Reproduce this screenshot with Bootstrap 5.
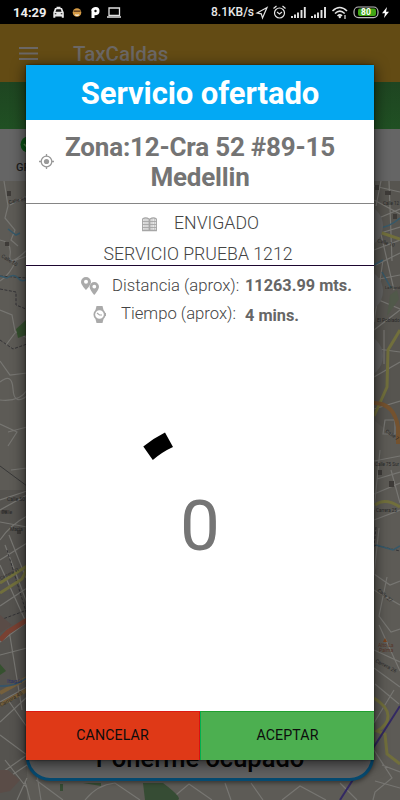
<!DOCTYPE html>
<html lang="es">
<head>
<meta charset="utf-8">
<meta name="viewport" content="width=device-width, initial-scale=1">
<title>TaxCaldas</title>
<link href="https://cdn.jsdelivr.net/npm/bootstrap@5.3.0/dist/css/bootstrap.min.css" rel="stylesheet">
<style>
html,body{height:100%}
body{font-family:Roboto,"Liberation Sans",sans-serif;background:#000;line-height:1.2}
svg{display:block;flex:none}
.phone{width:400px;height:800px}
.statusbar{height:24px;background:#000;color:#e8e8e8;font-size:12px;font-weight:500;padding:1px 10px 0 13px}
.clock{font-size:13px;font-weight:700;color:#eee;width:40px}
.appbar{height:58px;background:#634b14;padding-left:19px;color:#6b6765}
.brand{font-size:20.5px;font-weight:500;margin-left:35px;padding-top:3px}
.greenbar{height:47px;background:linear-gradient(#1e4521,#205023)}
.tabs{height:52px;background:#656565;color:#1c1c1c;font-size:11px;font-weight:500;padding:7px 0 0 16px}
.tab-icon{margin-left:4px}
.tab-label{padding-top:8px}
.map{height:619px;background:#5d5b56}
.pill{left:26px;top:720px;width:348px;height:61px;border:3px solid #064a70;border-radius:0 0 24px 24px;background:#626262;font-size:25.5px;font-weight:500;color:#050505;padding-bottom:4px;box-shadow:0 2px 4px #0006}
.dialog-box{left:26px;top:65px;width:348px;height:695px;border-radius:2px 2px 0 0;box-shadow:0 3px 14px 1px #0009,0 0 2px #000a;color:#666}
.dialog-title{height:55px;background:#03a9f4;font-size:31px;font-weight:700;letter-spacing:-.1px;padding-top:3px}
.address{height:84px;border-bottom:1px solid #858585;font-size:26px;font-weight:700;line-height:30px;letter-spacing:-.2px;color:#747474;padding:0 0 0 13px}
.address-text{width:292px;padding-top:1px}
.service{height:62px;border-bottom:1px solid #1d0730;font-size:17.7px;font-weight:300;color:#444;padding-top:9px}
.line-a{height:22px;padding-left:116px}
.line-a span{margin-left:17px}
.line-b{height:22px;margin-top:9px;padding-right:4px}
.line-c{height:24px;margin-top:8px;padding-left:54px;font-size:16.7px;font-weight:300;color:#444}
.line-d{height:24px;margin-top:4px;padding-left:67px;font-size:16.7px;font-weight:300;color:#444}
.line-c .key{margin-left:12px;width:133px}
.line-d .key{margin-left:14px;width:124px}
.val{font-size:16.3px;font-weight:700;color:#666}
.counter{font-size:71px;color:#757575;line-height:80px;margin-top:25px}
.tick{margin:106px 0 0 117px}
.actions{height:49px}
.actions .btn{border-radius:0;font-size:14.2px;color:#0d0d0d;padding:0;letter-spacing:.1px}
.actions .no{background:#df3917;border:0;border-top:1px solid #dc1a12;border-right:1px solid #e01010}
.actions .yes{background:#4caf50;border:0;border-top:1px solid #1f9f2f;border-left:1px solid #00b050}
</style>
<script src="https://cdn.jsdelivr.net/npm/bootstrap@5.3.0/dist/js/bootstrap.bundle.min.js"></script>
</head>
<body>
<div class="phone position-relative overflow-hidden d-flex flex-column">
  <div class="statusbar d-flex align-items-center">
    <span class="clock">14:29</span>
    <svg width="70" height="16" viewBox="53 5 70 16">
      <path d="M53.300 17.800V12.500l1.700-4.500h1.500V6.800h4V8H62l1.800 4.500v5.300h-2V16.500h-6.500v1.300z" fill="#e8e8e8"/><path d="M55.500 11.800l.9-2.500h4.300l.9 2.500zM54.800 13.300h1.500v1h-1.500zM60.800 13.300h1.500v1h-1.500z" fill="#111"/>
      <circle cx="77" cy="12.500" r="4.300" fill="#d69b45"/><path d="M73.500 10.500h7v1.300h-7z" fill="#56351e"/><path d="M75 14q2 1 4 0l-.5 2h-3z" fill="#f0e6d5"/>
      <path d="M91 10.500q1-3.500 4.800-3.500 3.700 0 3.700 4 0 4.500-5 4.300V18h-3v-7.500z" fill="#fff"/><circle cx="95.500" cy="11" r="1.200" fill="#111"/>
      <path d="M109 8h10.500v7.300H109zM107 17h14" fill="none" stroke="#e0e0e0" stroke-width="1.300"/>
    </svg>
    <span class="ms-auto">8.1KB/s</span>
    <svg width="136" height="16" viewBox="254 5 136 16" fill="none" stroke="#e4e4e4">
      <path d="M257 13l10-5.500-4.500 10.500-1.200-4.200z" stroke-width="1.200"/>
      <circle cx="279.500" cy="13" r="5" stroke-width="1.200"/><path d="M277 12l2.500 2 2.500-2M273.500 8.500l3-2.500M285.500 8.500l-3-2.500" stroke-width="1.200"/>
      <path d="M292 18v-2M295 18v-3.500M298 18v-5.500M301.500 18V10M304.800 18V7M312 18v-2M315 18v-3.500M318 18v-5.500M321.500 18V10M325 18V7" stroke-width="1.900"/>
      <path d="M332.500 11q7.200-7 14.500 0M335 13.500q4.800-4.600 9.700 0M337.500 16q2.400-2.200 4.500 0" stroke-width="1.600"/><circle cx="339.800" cy="17" r="1.200" fill="#e4e4e4" stroke="none"/><path d="M345 15v4" stroke-width="1.200"/>
      <rect x="354" y="7" width="24" height="10.600" rx="4.500" stroke-width="1.200" stroke="#bbb"/><rect x="358" y="8.500" width="18" height="7.600" rx="2" fill="#43a516" stroke="none"/>
      <text x="366" y="15.400" text-anchor="middle" font-size="8.500" font-weight="700" fill="#fff" stroke="none">80</text>
      <path d="M387 7l-5 6.200h3l-1 4.800 5-6.200h-3z" fill="#fff" stroke="none"/>
    </svg>
  </div>
  <header class="appbar d-flex align-items-center">
    <svg width="19" height="13" viewBox="0 0 19 13"><path d="M0 1h19M0 6.500h19M0 12h19" stroke="#6b6765" stroke-width="1.900"/></svg>
    <span class="brand">TaxCaldas</span>
  </header>
  <div class="greenbar"></div>
  <div class="tabs">
    <svg class="tab-icon" width="17" height="17" viewBox="0 0 17 17"><circle cx="8.500" cy="8.500" r="8" fill="#0a5215"/><path d="M4 8l3 3 5-6" fill="none" stroke="#5c8750" stroke-width="1.700"/></svg>
    <div class="tab-label">GPS</div>
  </div>
  <div class="map">
    <svg width="400" height="619" viewBox="0 181 400 619" fill="none">
      <path d="M0 490h27v310H0z" fill="#55534f"/>
      <path d="M375 181h25v260l-25-20z" fill="#575550"/>
      <!-- minor streets -->
      <g stroke="#777672" stroke-width="1.200">
        <path d="M4 181l4 25-3 12 10 12-4 10 7 6M10 205l17-9M0 240q12 2 10 15t17-5M0 281q10-6 16-21l11-4M0 310l12 5 3 16 12 7M6 345l9-12 12-4"/>
        <path d="M0 361l10 14 17-2M0 382q12-10 13 7t14 7M0 400q20 2 27-10M0 424l17 8-9 14M8 432l19-5M11 470l16-2V458"/>
        <path d="M0 500l27-9M0 510l27-15M0 522l27 5M0 540q10-15 27-24M0 560l27-17M0 583l27-17M0 606l27-18M5 545l22 58M0 565l25 55M9 535l17 43M0 642l27-20M9 630l13 80M0 655l27-7M0 702l27-15M0 722l27-25M8 700l19 27M0 735l27 20-27 19M5 760l22 28M0 783l27-18 10 10 4 25M25 781l5 19M36 780l27 20M27 778l-10 22"/>
        <path d="M374 186l26 6M374 200l26 14M381 181l-5 25M389 181l3 80M374 220l26-11M374 235l26-8M374 250l26-10M376 265l24-12M380 230l14 60M374 280l26-5M374 298l26 11M383 260l-9 62M374 330l26-20M378 349l22 3M374 377l26-15M384 330v34M374 409l26-8M385 420h10v14h-12z"/>
        <path d="M374 461l26-5M377 479l23-7M374 494l26-11M380 450l-6 60M391 470l9 33M374 520l26-10M379 528l-5 46 16 11 10-4M374 590l26 15M387 577l-8 39 12 16 9-3M374 650l26 12M379 625l21 46M374 668l26 19M394 690l-20 33M375 684l24 20M374 750l18 28-17 14-2 8M382 765l18 7"/>
        <path d="M85 800q12-15 30-17l25 17M170 800l19-16 23 16M225 783l6 17M251 783l12 17M282 800l18-14 26 14M340 783l17 17M375 781l25 7"/>
      </g>
      <!-- dark tracks and railway -->
      <g stroke="#343336" stroke-width="1" stroke-dasharray="3 1.500"><path d="M0 276l27 2M0 289l16 3v13l10 4M0 340l13 9 14-5M7 550l20 65M376 527l-2 20M374 545l26 6M0 620l27-10"/></g>
      <path d="M0 466l27 20" stroke="#383838"/>
      <g fill="#3e3b38"><path d="M7 191h4v5H7zM5 242h4v4H5zM2 510h5v3H2zM17 530h4v4h-4zM375 185h4v5h-4zM385 191h6v4h-6zM393 214h4v5h-4zM378 470h4v5h-4zM389 481h5v6h-5z"/></g>
      <!-- main roads -->
      <path d="M0 583l27-17M0 593l22-14 5-10M375 505q10-8 25 2M376 231l24 8M400 330l-12 20-1 37-13 29M374 698q14 9 14 18t-11 15l8 3 2 20 13 10" stroke="#716f3c" stroke-width="3"/>
      <path d="M0 640l8-8 19-12" stroke="#794132" stroke-width="5"/><path d="M0 693l27-15M0 705l27-15" stroke="#76603c" stroke-width="4"/><path d="M0 686q14 1 27-8" stroke="#385467" stroke-width="2"/>
      <path d="M374 403q20 0 24 24v17" stroke="#74522f" stroke-width="4"/>
      <path d="M400 706L340 800" stroke="#332963" stroke-width="2"/>
      <path d="M8 229l8 6 4-2M0 276l7 2q7-5 11 0t9 1M374 227q12 3 26-9M374 265l9-5M382 272l9 16M376 545l17 5 7-4" stroke="#36596a" stroke-width="1.500"/>
      <path d="M16 329l10-9v15l-8 3zM0 664l6 7-6 4z" fill="#36512f"/>
      <path d="M143 783h20q20 15 15 17h-33zM83 783h18v3zM60 784h3v7h-3z" fill="#364c34"/>
      <path d="M0 615l12 10-12 8zM0 770h8l12 10-10 11-10 2z" fill="#5a4c47"/>
      <path d="M390 295l7-5 2 9-12 17z" fill="#51594a"/>
      <!-- round map buttons half under the dialog -->
      <g fill="#626261"><circle cx="361" cy="226" r="22"/><circle cx="361" cy="291" r="22"/><circle cx="361" cy="356" r="22"/></g>
      <g fill="#282828" font-size="5" font-family="Roboto, sans-serif">
        <text x="9" y="204" transform="rotate(-12 9 204)">Calle 86</text><text x="1" y="257" transform="rotate(32 1 257)">Calle 50</text>
        <text x="7" y="501">Calle 50</text><text x="10" y="531">María</text><text x="1" y="514">Calle</text>
        <text x="1" y="580" font-size="4.500" transform="rotate(-28 1 580)">Carrera 51</text><text x="1" y="707" transform="rotate(-30 1 707)" font-size="5.500">Carrera 45</text>
        <text x="7" y="683" font-size="6" fill="#2c3265">Itagüí</text>
        <text x="385" y="289" font-size="4">La Florida</text><text x="377" y="322" font-size="4.800">El Poblado</text>
        <text x="377" y="242" transform="rotate(15 377 242)">Calle 10</text><text x="383" y="205" font-size="4.500">Calle 12</text>
        <text x="385" y="432" transform="rotate(35 385 432)">Calle 7</text><text x="375" y="466" font-size="4.500">Calle 75 Sur</text><text x="376" y="512" font-size="4.500">Carrera 25</text>
        <text x="377" y="591" transform="rotate(40 377 591)">Calle 27</text><text x="378" y="647" fill="#583629">Alto La</text><text x="379" y="652" fill="#583629">Palma</text><text x="375" y="662" transform="rotate(28 375 662)">Carrera 26</text>
      </g>
      <path d="M383 642l2-4 2 4z" fill="#7a421b"/>
    </svg>
  </div>

  <div class="pill position-absolute d-flex align-items-end justify-content-center">Ponerme ocupado</div>

  <section class="dialog-box position-absolute bg-white d-flex flex-column" role="dialog" aria-label="Servicio ofertado">
    <div class="dialog-title text-white d-flex align-items-center justify-content-center">Servicio ofertado</div>
    <div class="address d-flex align-items-center">
      <svg width="15" height="15" viewBox="0 0 15 15" fill="none" stroke="#999" stroke-width="1.300"><circle cx="7.500" cy="7.500" r="5.300"/><circle cx="7.500" cy="7.500" r="2.600" fill="#999" stroke="none"/><path d="M7.500 0v2.500M7.500 12.500V15M0 7.500h2.500M12.500 7.500H15"/></svg>
      <div class="address-text text-center">Zona:12-Cra 52 #89-15<br>Medellin</div>
    </div>
    <div class="service">
      <div class="line-a d-flex align-items-center">
        <svg width="15" height="15" viewBox="0 0 15 15" fill="none" stroke="#a6a6a6"><path d="M.7 13.500V2Q3.500-.3 7 2v11.500zM8 13.500V2q3.500-2.300 6.300 0v11.500z" stroke-width="1.300"/><path d="M3 1v13M5 1v13M10 1v13M12.200 1v13M0 4.500h15M0 7.500h15M0 10.500h15" stroke-width=".9"/></svg>
        <span>ENVIGADO</span>
      </div>
      <div class="line-b text-center">SERVICIO PRUEBA 1212</div>
    </div>
    <div class="line-c d-flex align-items-center">
      <svg width="20" height="19" viewBox="0 0 20 19" fill="#aaa" fill-rule="evenodd"><path d="M6 0a5 5 0 0 0-5 5c0 3 5 8 5 8s5-5 5-8a5 5 0 0 0-5-5zm0 2.800a2 2 0 1 1 0 4 2 2 0 0 1 0-4z"/><path d="M14.300 5a4.700 4.700 0 0 0-4.700 4.700c0 3 4.700 8.300 4.700 8.300s4.700-5.300 4.700-8.300A4.700 4.700 0 0 0 14.300 5zm0 2.700a1.900 1.900 0 1 1 0 3.800 1.900 1.900 0 0 1 0-3.800z"/></svg>
      <span class="key text-nowrap">Distancia (aprox):</span><span class="val text-nowrap">11263.99 mts.</span>
    </div>
    <div class="line-d d-flex align-items-center">
      <svg width="14" height="17" viewBox="0 0 14 17"><path d="M3.500 0h6l1 4h-8zM2.500 13h8l-1 4h-6z" fill="#aaa"/><circle cx="6.500" cy="8.500" r="5.200" fill="#fff" stroke="#aaa" stroke-width="1.700"/><path d="M4 7l2.500 2H9" fill="none" stroke="#aaa" stroke-width="1.200"/><path d="M12.500 7v3" stroke="#aaa"/></svg>
      <span class="key text-nowrap">Tiempo (aprox):</span><span class="val pt-1">4 mins.</span>
    </div>
    <svg class="tick" width="30" height="29" viewBox="143 432 30 29"><path d="M143.300 446.500Q153 438.500 165 432.500l8 14.500q-11 5-20.200 13z" fill="#000"/></svg>
    <div class="counter text-center">0</div>
    <div class="actions row g-0 mt-auto">
      <button class="btn no col-6">CANCELAR</button>
      <button class="btn yes col-6">ACEPTAR</button>
    </div>
  </section>
</div>
</body>
</html>
